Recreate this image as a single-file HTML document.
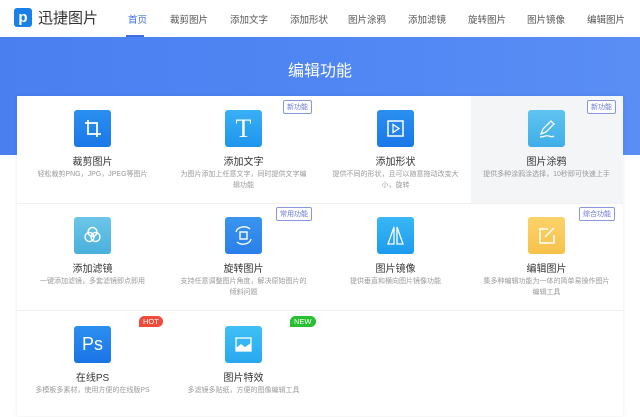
<!DOCTYPE html>
<html><head><meta charset="utf-8"><style>
*{margin:0;padding:0;box-sizing:border-box}
body{width:640px;height:408px;overflow:hidden;background:#fff;font-family:"Liberation Sans","Noto Sans CJK SC",sans-serif;position:relative}
.hdr{position:absolute;left:0;top:0;width:640px;height:37px;background:#fff}
.logo{position:absolute;left:14px;top:8px;width:18px;height:19px;background:#1a7fe6;border-radius:3px;color:#fff;font-weight:bold;font-size:15px;line-height:19px;text-align:center}
.brand{position:absolute;left:38px;top:7px;font-size:15px;color:#333}
.nav{position:absolute;top:12px;font-size:9.5px;color:#555}
.banner{position:absolute;left:0;top:37px;width:640px;height:118px;background:linear-gradient(90deg,#4a7ff0,#4f86f3 50%,#5a8ef5)}
.bt{position:absolute;left:0;width:640px;top:20px;text-align:center;color:#fff;font-size:16px}
.card{position:absolute;left:17px;top:96px;width:606px;height:320px;background:#fff;box-shadow:0 0 4px rgba(0,0,0,.08)}
.cell{position:absolute;width:151px;text-align:center}
.ic{position:absolute;width:37px;height:37px;border-radius:3px;left:57px;top:14px}
.t{position:absolute;left:0;width:151px;top:57px;font-size:10px;color:#333}
.d{position:absolute;left:12px;width:127px;top:73px;font-size:7px;color:#999;line-height:11px}
.bd{position:absolute;right:7px;top:4px;border:1px solid #8a97e0;color:#6a78d8;font-size:7px;padding:1px 3px;border-radius:2px;background:#fff}
.tag{position:absolute;top:6px;left:122px;color:#fff;font-size:7.5px;padding:1px 4px;border-radius:6px 6px 6px 0}
.hl{position:absolute;left:0;width:606px;height:1px;background:#f0f0f0}
</style></head><body>
<div class="hdr">
<div class="logo">p</div><div class="brand">迅捷图片</div>
<div class="nav" style="left:128px;color:#3d6fe0">首页</div>
<div style="position:absolute;left:126px;top:35px;width:18px;height:2px;background:#3d6fe0"></div>
<div class="nav" style="left:170px">裁剪图片</div>
<div class="nav" style="left:230px">添加文字</div>
<div class="nav" style="left:290px">添加形状</div>
<div class="nav" style="left:348px">图片涂鸦</div>
<div class="nav" style="left:408px">添加滤镜</div>
<div class="nav" style="left:468px">旋转图片</div>
<div class="nav" style="left:527px">图片镜像</div>
<div class="nav" style="left:587px">编辑图片</div>
</div>
<div class="banner"><div class="bt">编辑功能</div></div>
<div class="card">
<div class="hl" style="top:107px"></div><div class="hl" style="top:214px"></div>
<div class="cell" style="left:0;top:0;height:107px">
<div class="ic" style="background:linear-gradient(#2b8ff0,#1a78e8)"><svg width="37" height="37"><path d="M14 10v14h13M11 13h12v14" stroke="#fff" stroke-width="1.8" fill="none"/></svg></div>
<div class="t">裁剪图片</div><div class="d">轻松裁剪PNG，JPG，JPEG等图片</div></div>
<div class="cell" style="left:151px;top:0;height:107px">
<div class="ic" style="background:linear-gradient(#3ab0f5,#1d95ec);color:#fff;font-family:'Liberation Serif',serif;font-size:26px;line-height:37px">T</div>
<div class="t">添加文字</div><div class="d">为图片添加上任意文字，同时提供文字编辑功能</div><div class="bd">新功能</div></div>
<div class="cell" style="left:303px;top:0;height:107px">
<div class="ic" style="background:linear-gradient(#2b8ff0,#1a78e8)"><svg width="37" height="37"><rect x="11" y="11" width="15" height="15" stroke="#fff" stroke-width="1.5" fill="none"/><path d="M16 14.5v8l6-4z" stroke="#fff" stroke-width="1.3" fill="none"/></svg></div>
<div class="t">添加形状</div><div class="d">提供不同的形状，且可以随意拖动改变大小，旋转</div></div>
<div class="cell" style="left:454px;top:0;height:107px;background:#f4f5f7;width:152px">
<div class="ic" style="background:linear-gradient(#5ec4f0,#40aee8)"><svg width="37" height="37"><path d="M13 24l2-5 8-8 3 3-8 8zM12 27c4 0 6-2 9-1s3 1 5 0" stroke="#fff" stroke-width="1.3" fill="none"/></svg></div>
<div class="t">图片涂鸦</div><div class="d">提供多种涂鸦涂选择，10秒即可快速上手</div><div class="bd">新功能</div></div>
<div class="cell" style="left:0;top:107px;height:107px">
<div class="ic" style="background:linear-gradient(#6cc6e8,#4ab0dc)"><svg width="37" height="37"><circle cx="18.5" cy="15" r="4.5" stroke="#fff" stroke-width="1.4" fill="none"/><circle cx="15.5" cy="20" r="4.5" stroke="#fff" stroke-width="1.4" fill="none"/><circle cx="21.5" cy="20" r="4.5" stroke="#fff" stroke-width="1.4" fill="none"/></svg></div>
<div class="t">添加滤镜</div><div class="d">一键添加滤镜，多套滤镜即点即用</div></div>
<div class="cell" style="left:151px;top:107px;height:107px">
<div class="ic" style="background:linear-gradient(#3a95f0,#2a7fe8)"><svg width="37" height="37"><rect x="15" y="15" width="7" height="7" stroke="#fff" stroke-width="1.4" fill="none"/><path d="M11 15a8 6 0 0 1 14-3M26 22a8 6 0 0 1-14 3" stroke="#fff" stroke-width="1.4" fill="none"/></svg></div>
<div class="t">旋转图片</div><div class="d">支持任意调整图片角度，解决原始图片的倾斜问题</div><div class="bd">常用功能</div></div>
<div class="cell" style="left:303px;top:107px;height:107px">
<div class="ic" style="background:linear-gradient(#38b8f5,#1e9aee)"><svg width="37" height="37"><path d="M17 10L11 27h6zM20 10l6 17h-6z" stroke="#fff" stroke-width="1.3" fill="none"/></svg></div>
<div class="t">图片镜像</div><div class="d">提供垂直和横向图片镜像功能</div></div>
<div class="cell" style="left:454px;top:107px;height:107px">
<div class="ic" style="background:linear-gradient(#fcd36a,#f6c24a)"><svg width="37" height="37"><path d="M20 12h-8v14h14v-8M17 20l9-9" stroke="#fff" stroke-width="1.5" fill="none"/></svg></div>
<div class="t">编辑图片</div><div class="d">集多种编辑功能为一体的简单易操作图片编辑工具</div><div class="bd">综合功能</div></div>
<div class="cell" style="left:0;top:214px;height:107px">
<div class="ic" style="top:16px;background:linear-gradient(#2b8ff0,#1a74e6);color:#fff;font-size:18px;line-height:37px">Ps</div>
<div class="t" style="top:59px">在线PS</div><div class="d" style="top:75px">多模板多素材，使用方便的在线版PS</div><div class="tag" style="background:#f04a3a">HOT</div></div>
<div class="cell" style="left:151px;top:214px;height:107px">
<div class="ic" style="top:16px;background:linear-gradient(#40c0f5,#28a8ee)"><svg width="37" height="37"><rect x="11" y="12" width="15" height="13" stroke="#fff" stroke-width="1.3" fill="none"/><path d="M11 22l5-4 4 3 6-4v8H11z" fill="#fff"/></svg></div>
<div class="t" style="top:59px">图片特效</div><div class="d" style="top:75px">多滤镜多贴纸，方便的图像编辑工具</div><div class="tag" style="background:#26c030">NEW</div></div>
</div>
</body></html>
